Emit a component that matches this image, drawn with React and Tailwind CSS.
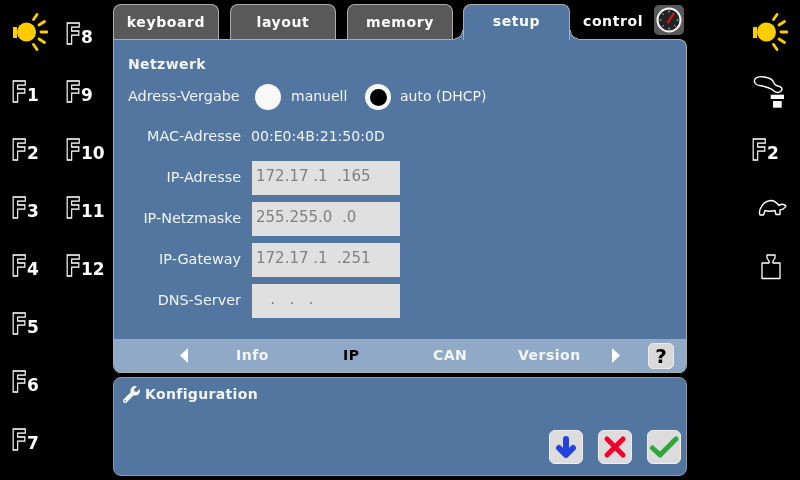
import React from "react";
import { FaWrench } from "react-icons/fa";

const Sun = () => (
  <svg width="36" height="38" viewBox="0 0 36 38" className="mb-[6px] block">
    <rect x="1" y="14" width="4" height="11" fill="#ffcc00" />
    <circle cx="14.5" cy="19" r="9.5" fill="#ffcc00" />
    <g stroke="#ffcc00" strokeWidth="2.8" strokeLinecap="round">
      <path d="M21.5 6.5 L25 1.5" />
      <path d="M27 12 L32.5 8.5" />
      <path d="M29 19 L35 19" />
      <path d="M27 26 L32.5 29.5" />
      <path d="M21.5 31.5 L25 36.5" />
    </g>
  </svg>
);

const FKey = ({ n }) => (
  <div className="flex items-end h-[21px] -mt-[1px] -ml-[1px] font-bold">
    <span className="w-[16px] text-[29px] leading-[21px] h-[21px] text-black [-webkit-text-stroke:1.3px_white] origin-left scale-x-[0.82]">
      F
    </span>
    <span className="text-white text-[17px] leading-[13px] mb-[1px]">{n}</span>
  </div>
);

const Tab = ({ label }) => (
  <div className="w-[106px] h-[35px] bg-[#595959] border border-b-0 border-[#a8aeb0] rounded-t-[8px] flex items-center justify-center text-white font-bold text-[14px] tracking-[0.6px]">
    {label}
  </div>
);

const Field = ({ label, value }) => (
  <div className="flex items-center h-[34px]">
    <div className="w-[113px] text-right text-[14.4px] text-[#f0f4f6]">{label}</div>
    <div className="ml-[11px] w-[148px] h-[34px] bg-[#e0e0e0] pl-[4px] leading-[31px] text-[15px] text-[#808080] whitespace-pre">
      {value}
    </div>
  </div>
);

const Radio = ({ on }) => (
  <div className="w-[26px] h-[26px] rounded-full bg-[#f8f9f6] flex items-center justify-center">
    {on && <div className="w-[17px] h-[17px] rounded-full bg-black" />}
  </div>
);

const IconBtn = ({ children }) => (
  <div className="w-[34px] h-[34px] rounded-[6px] bg-[#dcdcdc] border border-[#eeeeee] flex items-center justify-center">
    {children}
  </div>
);

export default function App() {
  return (
    <div className="w-[800px] h-[480px] bg-black overflow-hidden font-['DejaVu_Sans',sans-serif]">
      <div className="w-full h-full flex will-change-transform">
        {/* left function keys */}
        <div className="w-[113px] pt-[6px] pl-[12px] grid grid-flow-col grid-rows-[repeat(8,58px)] grid-cols-[54px_47px] items-center">
          <Sun />
          <FKey n="1" />
          <FKey n="2" />
          <FKey n="3" />
          <FKey n="4" />
          <FKey n="5" />
          <FKey n="6" />
          <FKey n="7" />
          <FKey n="8" />
          <FKey n="9" />
          <FKey n="10" />
          <FKey n="11" />
          <FKey n="12" />
        </div>

        {/* main */}
        <div className="w-[574px] flex flex-col">
          <div className="h-[39px] pt-[4px] flex items-end relative z-10">
            <Tab label="keyboard" />
            <div className="ml-[11px]">
              <Tab label="layout" />
            </div>
            <div className="ml-[11px]">
              <Tab label="memory" />
            </div>
            <div className="ml-[10px] relative w-[107px] h-[36px] -mb-[1px] bg-[#52769f] border border-b-0 border-[#a8aeb0] rounded-t-[8px] flex items-center justify-center text-white font-bold text-[14px] tracking-[0.6px] pb-[2px]">
              setup
              <div className="absolute -left-[9px] bottom-0 w-[8px] h-[9px] bg-[#52769f]">
                <div className="w-full h-full bg-black rounded-br-[8px] border-r border-b border-[#a8aeb0] -mt-[1px]" />
              </div>
              <div className="absolute -right-[9px] bottom-0 w-[8px] h-[9px] bg-[#52769f]">
                <div className="w-full h-full bg-black rounded-bl-[8px] border-l border-b border-[#a8aeb0] -mt-[1px]" />
              </div>
            </div>
            <div className="ml-[13px] h-[35px] flex items-center text-white font-bold text-[14px] tracking-[0.6px]">control</div>
            <div className="ml-[11px] mb-[4px] w-[30px] h-[30px] rounded-[5px] bg-[#595959] flex items-center justify-center">
              <svg width="26" height="26" viewBox="0 0 26 26">
                <circle cx="13" cy="13" r="11.5" fill="#222" stroke="#f4f4f4" strokeWidth="2" />
                <g stroke="#cccccc" strokeWidth="1">
                  <path d="M13 3.5V5.5M13 20.5V22.5M3.5 13H5.5M20.5 13H22.5M6.3 6.3L7.7 7.7M18.3 18.3L19.7 19.7M6.3 19.7L7.7 18.3" />
                </g>
                <path d="M11.5 16 L18 6" stroke="#ee1111" strokeWidth="2" />
              </svg>
            </div>
          </div>

          <div className="h-[334px] flex flex-col bg-[#52769f] border border-[#a8aeb0] border-b-0 rounded-tr-[8px] rounded-b-[8px] overflow-hidden">
            <div className="flex-1 pl-[14px] text-white">
              <div className="mt-[16px] h-[17px] leading-[17px] font-bold text-[14px] tracking-[0.4px] text-[#f3f6f7]">Netzwerk</div>
              <div className="mt-[11px] flex items-center h-[26px] text-[14px] text-[#f0f4f6]">
                <div className="w-[113px] text-[14.4px] pb-[1px]">Adress-Vergabe</div>
                <div className="ml-[14px]">
                  <Radio />
                </div>
                <div className="ml-[10px] w-[74px] pb-[1px]">manuell</div>
                <Radio on />
                <div className="ml-[9px] pb-[1px]">auto (DHCP)</div>
              </div>
              <div className="mt-[17px] flex items-center h-[20px] text-[14px] text-[#f0f4f6]">
                <div className="w-[113px] text-right text-[14.4px]">MAC-Adresse</div>
                <div className="ml-[10px] text-[14.1px]">00:E0:4B:21:50:0D</div>
              </div>
              <div className="mt-[14px] flex flex-col gap-[7px]">
                <Field label="IP-Adresse" value="172.17 .1  .165" />
                <Field label="IP-Netzmaske" value="255.255.0  .0" />
                <Field label="IP-Gateway" value="172.17 .1  .251" />
                <Field label="DNS-Server" value="   .   .   ." />
              </div>
            </div>

            <div className="h-[34px] bg-[#8fa9c7] flex items-center font-bold text-[14px] tracking-[0.5px] text-[#f3f6f7] border-b border-[#a8aeb0]">
              <svg width="9" height="15" viewBox="0 0 9 15" className="ml-[66px] shrink-0">
                <path d="M8 0V15L0 7.5Z" fill="#fff" />
              </svg>
              <div className="ml-[47px] w-[40px]">Info</div>
              <div className="ml-[67px] w-[30px] text-black">IP</div>
              <div className="ml-[60px] w-[50px]">CAN</div>
              <div className="ml-[35px] w-[70px]">Version</div>
              <svg width="9" height="15" viewBox="0 0 9 15" className="ml-[23px] shrink-0">
                <path d="M1 0V15L9 7.5Z" fill="#fff" />
              </svg>
              <div className="ml-[28px] w-[26px] h-[26px] rounded-[5px] bg-[#d9d9d9] border border-[#e9e9e9] flex items-center justify-center text-black text-[20px] tracking-normal">
                ?
              </div>
            </div>
          </div>

          <div className="mt-[4px] h-[99px] flex flex-col bg-[#52769f] border border-[#8b9cae] rounded-[8px] px-[9px]">
            <div className="mt-[7px] flex items-center h-[18px] font-bold text-[14px] tracking-[0.35px] text-[#f3f6f7]">
              <FaWrench className="text-[#f3f6f7] w-[17px] h-[17px]" />
              <span className="ml-[5px]">Konfiguration</span>
            </div>
            <div className="mt-[27px] flex justify-end gap-[15px] mr-[-4px]">
              <IconBtn>
                <svg width="24" height="24" viewBox="0 0 24 24" fill="none" stroke="#2244dd" strokeWidth="6" strokeLinecap="round" strokeLinejoin="round">
                  <path d="M12 4V18M5 13L12 20L19 13" />
                </svg>
              </IconBtn>
              <IconBtn>
                <svg width="24" height="24" viewBox="0 0 24 24" fill="none" stroke="#f5002c" strokeWidth="5" strokeLinecap="round">
                  <path d="M4 4L20 20M20 4L4 20" />
                </svg>
              </IconBtn>
              <IconBtn>
                <svg width="30" height="24" viewBox="0 0 30 24" fill="none" stroke="#2aa83c" strokeWidth="5" strokeLinecap="round" strokeLinejoin="round">
                  <path d="M3.5 13L11 20L27 4" />
                </svg>
              </IconBtn>
            </div>
          </div>
        </div>

        {/* right column */}
        <div className="flex-1 pt-[6px] pl-[65px] grid grid-rows-[repeat(8,58px)] items-center">
          <Sun />
          <svg width="34" height="36" viewBox="0 0 34 36">
            <path d="M2.5 5C3 2.5 7 1.5 10 1.7C15 2 19 3 21 6C22 9 23 10.5 26 11C30 12 31 14 29 16C27 18 24 18 22 16C20 13.5 17 13 14 12C10 10.5 7 11 4.5 9.5C3 8.5 2 7 2.5 5Z" fill="none" stroke="#fff" strokeWidth="1.4" />
            <rect x="18.7" y="19.7" width="13.3" height="4.3" fill="#fff" />
            <rect x="21" y="26" width="8.7" height="6.7" fill="#fbfdf8" />
          </svg>
          <FKey n="2" />
          <svg width="30" height="20" viewBox="0 0 30 20" className="ml-[5px] -mt-[2px]">
            <path d="M3 17C1 12 6 3 14 2.5C18 2.5 20 5 22 7.5C24 6 27 6 29 8C28 10 25 12 23 12L23 16.5H19L18 12.5C14 13.5 11 13.5 8 12.5L6.5 17Z" fill="none" stroke="#fff" strokeWidth="1.4" strokeLinejoin="round" />
          </svg>
          <svg width="20" height="26" viewBox="0 0 20 26" className="ml-[9px]">
            <path d="M6 1H14V4L12 7V9H19V24.5H1V9H8V7L6 4Z" fill="none" stroke="#fff" strokeWidth="1.3" strokeLinejoin="round" />
          </svg>
        </div>
      </div>
    </div>
  );
}
